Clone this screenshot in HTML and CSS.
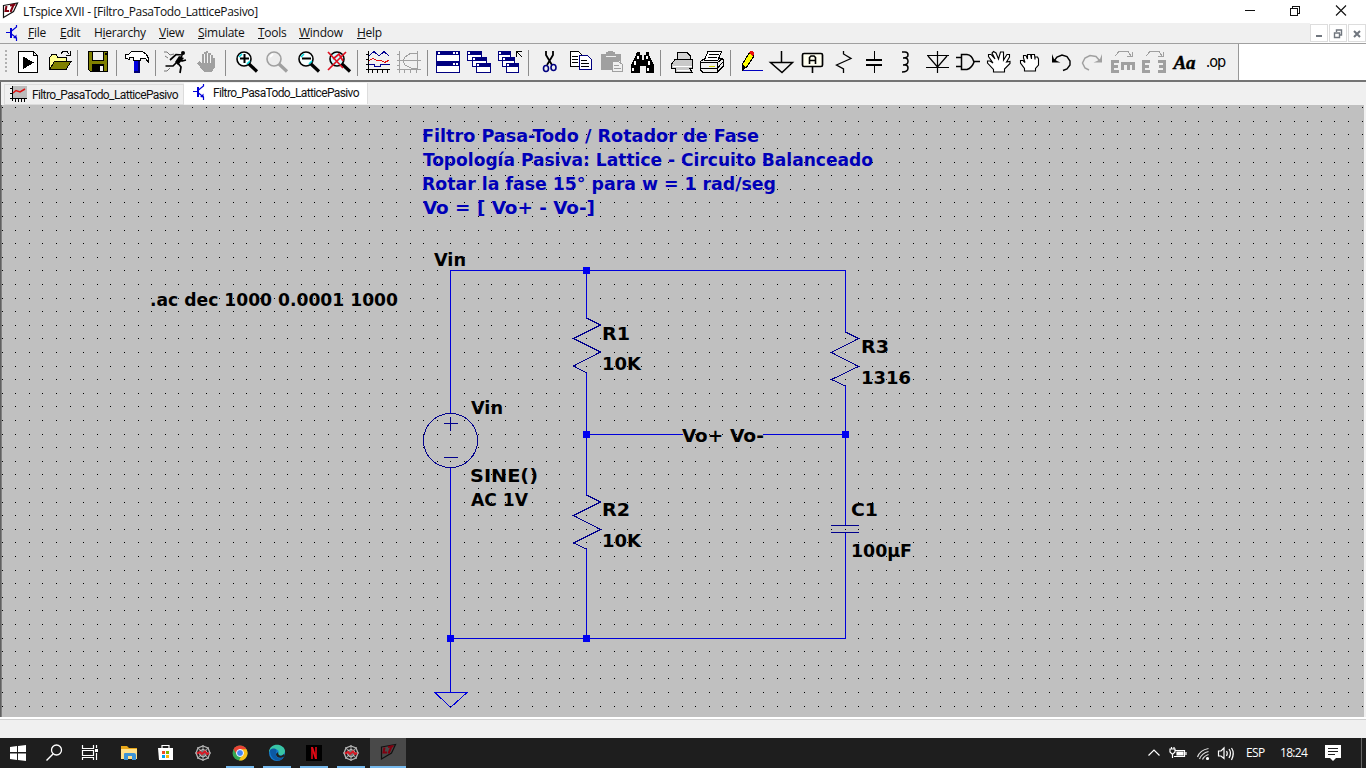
FILE: index.html
```html
<!DOCTYPE html>
<html lang="es">
<head>
<meta charset="utf-8">
<title>LTspice XVII - [Filtro_PasaTodo_LatticePasivo]</title>
<link rel="stylesheet" href="styles.css">
</head>
<body>
<svg class="defs" width="0" height="0" aria-hidden="true">
  <symbol id="lt" viewBox="0 0 17 17">
    <path d="M1.500 3.500L15.500 1L11.500 9.500L1.500 15.500Z" class="lt-face" stroke-width="1.200"/>
    <path d="M4.500 4L3.500 9H7M8 3.500L13.500 2.500M11.500 3L8.500 10" fill="none" stroke="#800010" stroke-width="2"/>
  </symbol>
  <symbol id="bjt" viewBox="0 0 12 16">
    <path d="M0 7.500H5M10.500 0V2L5.500 6M5.500 9L10.500 13V16" fill="none" stroke="#0000d8" stroke-width="1.200"/>
    <path d="M4 3H6V13H4ZM7 13L10.500 9.500V13.500Z" fill="#0000d8"/>
  </symbol>
  <symbol id="spider" viewBox="0 0 18 18">
    <path d="M9 1V17M1 9H17M3.300 3.300L14.700 14.700M14.700 3.300L3.300 14.700" stroke="#999" stroke-width="1.200"/>
    <path d="M9 2L14 4L16 9L14 14L9 16L4 14L2 9L4 4Z" fill="none" stroke="#b5b5b5" stroke-width="1.300"/>
    <path d="M9 5.500L12 6.500L13 9L11.500 12L9 13L6.500 12L5 9L6 6.500Z" fill="#777" stroke="#ddd" stroke-width=".8"/>
    <path d="M3 9.500L6 8L8 10L11 7.500L13 10L15 9" fill="none" stroke="#d81824" stroke-width="2"/>
  </symbol>
  <symbol id="lens" viewBox="0 0 24 24">
    <circle cx="9" cy="9" r="7" stroke-width="1.600"/>
    <path d="M14 14L22 21.500" stroke-width="3.200" fill="none"/>
  </symbol>
</svg>

<header class="titlebar">
  <svg class="app-logo" width="17" height="17"><use href="#lt"/></svg>
  <span class="title">LTspice XVII - [Filtro_PasaTodo_LatticePasivo]</span>
  <svg class="window-buttons" width="138" height="24" viewBox="1228 0 138 24">
    <path d="M1245 10.500H1255M1290.500 8.500H1297.500V15.500H1290.500ZM1292.500 8V6.500H1299.500V13.500H1298" fill="none" stroke="#111" shape-rendering="crispEdges"/>
    <path d="M1336 5.500L1346 15.500M1346 5.500L1336 15.500" stroke="#111" stroke-width="1.100"/>
  </svg>
</header>

<nav class="menubar">
  <svg class="menu-logo" width="12" height="16"><use href="#bjt"/></svg>
  <div class="menus">
    <span><u>F</u>ile</span><span><u>E</u>dit</span><span>H<u>i</u>erarchy</span><span><u>V</u>iew</span><span><u>S</u>imulate</span><span><u>T</u>ools</span><span><u>W</u>indow</span><span><u>H</u>elp</span>
  </div>
  <div class="mdi">
    <span><svg width="16" height="17" viewBox="0 0 16 17"><path d="M5 11H11" stroke="#70767e" stroke-width="2"/></svg></span>
    <span><svg width="16" height="17" viewBox="0 0 16 17"><path d="M4.500 8H9.500V12.500H4.500ZM6.500 7V5H11.500V10H10" fill="none" stroke="#70767e" stroke-width="1.400"/></svg></span>
    <span><svg width="16" height="17" viewBox="0 0 16 17"><path d="M5 6L11 12M11 6L5 12" stroke="#70767e" stroke-width="2"/></svg></span>
  </div>
</nav>

<div class="toolrow">
<div class="toolbar">
  <i class="grip"></i>
  <svg viewBox="12 44 31 36"><path d="M18.500 51.500H33.500L37.500 55.500V72.500H18.500ZM33.500 51.500V55.500H37.500" fill="#fff" stroke="#000"/><path d="M23 56.500L34 62.500L23 69Z"/></svg>
  <svg viewBox="43 44 31 36"><path d="M49.500 69.500V57.500L52 54.500H56L58 57.500H66V61" fill="#ffff90" stroke="#000"/><path d="M49.500 69.500L54.500 61.500H71L66 69.500Z" fill="#808000" stroke="#000"/><path d="M61 53.500L63 51.500H67L69 54M66 55.500H70.500V51" fill="none" stroke="#000"/></svg>
  <i class="sep"></i>
  <svg viewBox="82 44 31 36"><path d="M88.500 51.500H107.500V71.500H90.500L88.500 69.500Z" fill="#808000" stroke="#000"/><path d="M92.500 51.500H103.500V60.500H92.500Z" fill="#f0f0f0" stroke="#000"/><path d="M92 64H104V72H92ZM105 53H107V55H105Z"/><path d="M100 66H103V71H100Z" fill="#f0f0f0"/></svg>
  <i class="sep"></i>
  <svg viewBox="121 44 31 36"><path d="M134 60H140V73H134Z" fill="#0000e0"/><path d="M138 60H140V73H134V71H138Z" fill="#000070"/><path d="M125.500 58.500V54.500H128.500L131.500 51.500H142.500L146.500 54.500L148.500 58.500V62.500L145.500 58.500H140.500V60.500H133.500V57.500H129.500V59.500Z" fill="#fff" stroke="#000"/></svg>
  <i class="sep"></i>
  <svg class="smooth" viewBox="160 44 31 36"><path d="M182 56L177 62L181 67L180 73M177 62L173 66H165.500M183 55L176 54.500L170 60M180 58L182 61L186 60" fill="none" stroke="#000" stroke-width="1.700"/><path d="M179 56L184 58L178 65L175 62Z"/><circle cx="183" cy="53" r="2"/><path d="M164 52L167 52L170 55L174 54M165 56L168 58M170 68L167 71H164" fill="none" stroke="#777"/></svg>
  <svg viewBox="191 44 31 36"><path d="M203 71L197 63L199 61L202 64V54H204V52H206V51H208V53H211V55H213V58H215V67L212 72H204Z" fill="#a0a0a0"/><path d="M204.500 54V63M207.500 53V63M210.500 55V63" stroke="#f4f4f4"/></svg>
  <i class="sep"></i>
  <svg class="smooth" viewBox="230 44 31 36"><g fill="#f8ffff" stroke="#000"><use href="#lens" x="235" y="50" width="24" height="24"/></g><path d="M240 58.500H249M244.500 54V63" stroke="#000" stroke-width="2"/><path d="M239 57L242 54M247 64L250 61" stroke="#00d8e0" stroke-width="1.500"/></svg>
  <svg class="smooth" viewBox="261 44 31 36"><g fill="#ededed" stroke="#a0a0a0"><use href="#lens" x="265" y="50" width="24" height="24"/></g><path d="M270 57L273 54" stroke="#fff" stroke-width="2"/></svg>
  <svg class="smooth" viewBox="292 44 31 36"><g fill="#f8ffff" stroke="#000"><use href="#lens" x="297" y="50" width="24" height="24"/></g><path d="M302 58.500H311" stroke="#000" stroke-width="2"/><path d="M301 57L304 54M309 64L312 61" stroke="#00d8e0" stroke-width="1.500"/></svg>
  <svg class="smooth" viewBox="323 44 31 36"><g fill="#d0faff" stroke="#000"><use href="#lens" x="328" y="50" width="24" height="24"/></g><path d="M328 52L343 68M346 52L328 70M333 59L339 54L343 61" fill="none" stroke="#e01020" stroke-width="1.700"/></svg>
  <i class="sep"></i>
  <svg viewBox="362 44 31 36"><path d="M368.500 51V73M366 69.500H390M366 54.500H369M366 59.500H369M366 64.500H369M372.500 69V73M377.500 69V73M382.500 69V73M387.500 69V73" stroke="#000"/><path d="M369 56L374 51.500L379 56L384 51.500L389 56M369 64.500H374.500V66.500H380.500V64.500H390" fill="none" stroke="#000090"/><path d="M369 60.500L373 58.500L377 60.500H381L385 62.500L389 60" fill="none" stroke="#e01010" stroke-width="1.300"/></svg>
  <svg viewBox="393 44 31 36"><path d="M399.500 51V73M397 69.500H421M397 54.500H400M397 60.500H400M397 65.500H400M404.500 69V73M410.500 69V73M416.500 69V73M417.500 51V69M399 60.500H421M417 53H411L405 57L403 61L405 65L411 68H417" fill="none" stroke="#a0a0a0"/></svg>
  <i class="sep"></i>
  <svg viewBox="432 44 31 36"><path d="M436.500 51.500H459.500V61.500H436.500ZM436.500 62.500H459.500V72.500H436.500Z" fill="#fff" stroke="#000080"/><path d="M437 51H460V55H437ZM437 62H460V66H437Z" fill="#000080"/><path d="M438 53H440M453 53H455M456 53H458M453 64H455M456 64H458" stroke="#fff" stroke-width="2"/></svg>
  <svg viewBox="463 44 31 36"><path d="M467.500 51.500H481.500V60.500H467.500ZM472.500 57.500H486.500V66.500H472.500ZM476.500 63.500H490.500V72.500H476.500Z" fill="#fff" stroke="#000080"/><path d="M467 51H482V55H467ZM472 57H487V61H472ZM476 63H491V67H476Z" fill="#000080"/><path d="M468 53H470M473 59H475M477 65H479" stroke="#fff" stroke-width="2"/></svg>
  <svg viewBox="494 44 31 36"><path d="M498.500 51.500H510.500V60.500H498.500ZM502.500 57.500H514.500V66.500H502.500ZM506.500 63.500H518.500V72.500H506.500Z" fill="#fff" stroke="#000080"/><path d="M498 51H511V55H498ZM502 57H515V61H502ZM506 63H519V67H506Z" fill="#000080"/><path d="M499 53H501M503 59H505M507 65H509" stroke="#fff" stroke-width="2"/><path d="M522 51.500H516.500V57M517 52L522 57" fill="none" stroke="#000" stroke-width="1.300"/></svg>
  <i class="sep"></i>
  <svg class="smooth" viewBox="533 44 31 36"><path d="M546 51V55L552 65M553 51V55L547 65" fill="none" stroke="#000" stroke-width="1.800"/><g fill="none" stroke="#000080" stroke-width="1.600"><ellipse cx="546" cy="68.500" rx="2.500" ry="3"/><ellipse cx="553.500" cy="67.500" rx="2.500" ry="3"/></g></svg>
  <svg viewBox="564 44 31 36"><path d="M570.500 51.500H578.500L582.500 55.500V66.500H570.500Z" fill="#fff" stroke="#000"/><path d="M572 56.500H578M572 59.500H578M572 62.500H578" stroke="#000"/><path d="M579.500 55.500H587.500L591.500 59.500V69.500H579.500Z" fill="#fff" stroke="#000080"/><path d="M581 60.500H587M581 63.500H589M581 66.500H589" stroke="#000"/></svg>
  <svg viewBox="595 44 31 36"><path d="M601 54H606V52H608V51H613V52H615V54H621V70H601Z" fill="#a0a0a0"/><path d="M606 56H616M612 61H619L623 64V71H612Z" fill="#f0f0f0" stroke="#f0f0f0"/><path d="M612.500 61.500H618.500L622.500 64.500V71.500H612.500ZM614 65.500H619M614 68.500H621" fill="none" stroke="#a0a0a0"/></svg>
  <svg viewBox="626 44 31 36"><path d="M637 52H640V55H642V60H644V55H646V52H649V55L654 65V73H646V66H640V73H631V65L636 55Z"/><path d="M635 61V65M649 61V65M638 56V59M647 56V59M633 68V71M648 68V71" stroke="#fff" stroke-width="1.500"/></svg>
  <i class="sep"></i>
  <svg viewBox="665 44 31 36"><path d="M677.500 60V52.500H687L690.500 56V60" fill="#d5d5d5" stroke="#000"/><path d="M671.500 68.500V64L675 59.500H692.500V68.500H690L692 72.500H675V68.500Z" fill="#c9c9c9" stroke="#000"/><path d="M673 66.500H692M677 70.500H690" stroke="#fff"/></svg>
  <svg viewBox="696 44 31 36"><path d="M700.500 61.500L705 58H722L723.500 60V66L717 72.500H703L700.500 70Z" fill="#eee" stroke="#000"/><path d="M704.500 60L708 51.500H721.500L718 60Z" fill="#fff" stroke="#000"/><path d="M709 54.500H719M708 57.500H717M701 62.500H717V72M717 63L723 58M701 68.500H717L723 62" fill="none" stroke="#000"/><path d="M709 66.500H715" stroke="#d5d500"/></svg>
  <i class="sep"></i>
  <svg viewBox="735 44 31 36"><path d="M749 53L754 56L746 68L742 65Z" fill="#ff0" stroke="#000"/><path d="M749 52L751 51L754 52V54L753 56L749 53Z" fill="#e81010"/><path d="M742 65L746 68L742 71Z"/><path d="M743 70.500H763" stroke="#0000c0"/></svg>
  <svg class="smooth" viewBox="766 44 31 36"><path d="M781.500 51V62M770.500 62.500H792.500L782 72.500Z" fill="none" stroke="#000" stroke-width="1.500"/></svg>
  <svg class="smooth" viewBox="797 44 31 36"><rect x="802.500" y="53.500" width="20" height="13" rx="1.500" fill="#fffff0" stroke="#000" stroke-width="1.700"/><path d="M812.500 67V73M809.500 64V57.500L811 56H814L815.500 57.500V64M810 60.500H815" fill="none" stroke="#000" stroke-width="1.600"/></svg>
  <svg class="smooth" viewBox="828 44 31 36"><path d="M843.500 51V54L851 58.500L836.500 65L843.500 69V73" fill="none" stroke="#000" stroke-width="1.300"/></svg>
  <svg viewBox="859 44 31 36"><path d="M866 60H882M866 65H882" stroke="#000" stroke-width="2"/><path d="M874.500 51V60M874.500 66V73" stroke="#000"/></svg>
  <svg class="smooth" viewBox="890 44 31 36"><path d="M902 52H905Q908 52 908 55Q908 58 903 58H905Q908 58 908 61.500Q908 65 903 65H905Q908 65 908 68Q908 72 902 72" fill="none" stroke="#000" stroke-width="1.500"/></svg>
  <svg class="smooth" viewBox="921 44 31 36"><path d="M937.500 51V73M927 55.500H949M928 56L937.500 67L947 56M926 67.500H949" fill="none" stroke="#000" stroke-width="1.200"/></svg>
  <svg class="smooth" viewBox="952 44 31 36"><path d="M956 57.500H962M956 66.500H962M974 61.500H980" stroke="#000" stroke-width="1.300"/><path d="M961.500 54.500H967Q972 55 974 62Q972 68 967 69.500H961.500Z" fill="#eee" stroke="#000" stroke-width="1.500"/></svg>
  <svg class="smooth" viewBox="983 44 31 36"><path d="M993.500 72V69.500L987.500 63V61H990L993 63L988.500 56.500V54.500H991L995 59L992 53L993.500 51.500L996 53L998.500 59L1000.500 52H1003.500V60L1007 54.500H1009.500V57L1006.500 62L1010 61.500V63.500L1004.500 69V72Z" fill="#fff" stroke="#000" stroke-width="1.100"/></svg>
  <svg class="smooth" viewBox="1014 44 31 36"><path d="M1024.500 71V68.500L1020.500 63V60.500H1023L1025 62.500L1023.500 58V55.500H1026L1027.500 59V54.500H1030.500L1031.500 59V54.500H1034.500L1035 59.500V57H1037.500L1038.500 59V65L1035.500 68.500V71Z" fill="#fff" stroke="#000" stroke-width="1.100"/></svg>
  <svg class="smooth" viewBox="1045 44 31 36"><path d="M1054 61L1057 57L1062 55L1067 56.500L1070 61V65L1067 69L1063 70.500" fill="none" stroke="#000" stroke-width="1.400"/><path d="M1052 54V62.500H1060.500L1057 61L1054 59Z"/></svg>
  <svg class="smooth" viewBox="1076 44 31 36"><path d="M1100 61L1096 56.500L1090 55.500L1085 58L1082.500 63L1085 68L1089 70" fill="none" stroke="#a0a0a0" stroke-width="1.500"/><path d="M1102 54V62.500H1093.500L1097 61L1100 59Z" fill="#a0a0a0"/></svg>
  <svg viewBox="1107 44 31 36"><path d="M1115 56L1119 51.500H1128L1131 56M1127 56.500H1132V52" fill="none" stroke="#a0a0a0"/><path d="M1119 61.500H1112.500V71.500H1119M1113 66.500H1118M1121 63.500H1135M1122.500 63V70M1128 65V70M1133.500 63V70" fill="none" stroke="#a0a0a0" stroke-width="3"/></svg>
  <svg viewBox="1138 44 31 36"><path d="M1146 56L1150 51.500H1159L1162 56M1158 56.500H1163V52" fill="none" stroke="#a0a0a0"/><path d="M1150 61.500H1143.500V71.500H1150M1144 66.500H1149M1158 61.500H1164.500V71.500H1158M1159 66.500H1164" fill="none" stroke="#a0a0a0" stroke-width="3"/></svg>
  <span class="tool-text aa">Aa</span>
  <span class="tool-text op">.op</span>
</div>
</div>

<div class="tabs">
  <div class="tab inactive"><svg width="17" height="17" viewBox="0 0 17 17"><path d="M2 0H17V12H2Z" fill="#bcbcbc"/><path d="M2.500 0V15M0 12.500H17M0 2.500H3M0 7.500H3M5.500 12V16M8.500 12V16M11.500 12V16M14.500 12V16" stroke="#000"/><path d="M3 7L6 4.500L10 6L15 3" fill="none" stroke="#e01010" stroke-width="1.500"/></svg><span>Filtro_PasaTodo_LatticePasivo</span></div>
  <div class="tab active"><svg width="12" height="16"><use href="#bjt"/></svg><span>Filtro_PasaTodo_LatticePasivo</span></div>
</div>

<main class="sheet">
  <svg width="1362" height="612" viewBox="2 105 1362 612">
    <defs>
      <pattern id="grid" x="2" y="107" width="68" height="68" patternUnits="userSpaceOnUse">
        <path d="M0 .500h1m12 0h1m13 0h1m12 0h1m13 0h1M0 14.500h1m12 0h1m13 0h1m12 0h1m13 0h1M0 27.500h1m12 0h1m13 0h1m12 0h1m13 0h1M0 41.500h1m12 0h1m13 0h1m12 0h1m13 0h1M0 55.500h1m12 0h1m13 0h1m12 0h1m13 0h1" stroke="#000" shape-rendering="crispEdges"/>
      </pattern>
    </defs>
    <rect x="2" y="105" width="1362" height="612" fill="url(#grid)"/>
    <g class="wire">
      <path d="M450.500 413V270.500H845.500V332M586.500 270V318M586.500 373V495M586.500 549V638M586 434.500H683M763 434.500H845M845.500 386V525M845.500 533V638.500H450M450.500 467V692M435 692.500H467L450.500 707.500Z"/>
    </g>
    <g class="part">
      <path d="M586.500 318L600.500 325L573.500 338.500L600.500 352L573.500 366L586.500 373"/>
      <path d="M586.500 495L600.500 502L573.500 515.500L600.500 529.500L573.500 543L586.500 549"/>
      <path d="M845.500 332L858.500 338.500L831.500 352.500L858.500 366.500L831.500 379.500L845.500 386"/>
      <path d="M831 525.500H859M831 532.500H859"/>
      <circle cx="450.500" cy="440.500" r="27"/>
      <path d="M444 423.500H458M450.500 417V431M444 457.500H458"/>
    </g>
    <path class="node" d="M583 267h7v7h-7zM583 431h7v7h-7zM842 431h7v7h-7zM583 635h7v7h-7zM447 635h7v7h-7z"/>
    <g class="note">
      <text x="422" y="141.500" textLength="337" lengthAdjust="spacingAndGlyphs">Filtro Pasa-Todo / Rotador de Fase</text>
      <text x="423" y="165.500" textLength="450" lengthAdjust="spacingAndGlyphs">Topología Pasiva: Lattice - Circuito Balanceado</text>
      <text x="422" y="189.500" textLength="354" lengthAdjust="spacingAndGlyphs">Rotar la fase 15° para w = 1 rad/seg</text>
      <text x="423" y="213.500" textLength="172" lengthAdjust="spacingAndGlyphs">Vo = [ Vo+ - Vo-]</text>
    </g>
    <g class="label">
      <text x="150" y="305.500" textLength="248" lengthAdjust="spacingAndGlyphs">.ac dec 1000 0.0001 1000</text>
      <text x="434" y="265.500" textLength="32" lengthAdjust="spacingAndGlyphs">Vin</text>
      <text x="471" y="413.500" textLength="32" lengthAdjust="spacingAndGlyphs">Vin</text>
      <text x="470" y="481.500" textLength="68" lengthAdjust="spacingAndGlyphs">SINE()</text>
      <text x="471" y="505.500" textLength="57" lengthAdjust="spacingAndGlyphs">AC 1V</text>
      <text x="602" y="339.500" textLength="28" lengthAdjust="spacingAndGlyphs">R1</text>
      <text x="602" y="369.500" textLength="39" lengthAdjust="spacingAndGlyphs">10K</text>
      <text x="602" y="515.500" textLength="28" lengthAdjust="spacingAndGlyphs">R2</text>
      <text x="602" y="546.500" textLength="39" lengthAdjust="spacingAndGlyphs">10K</text>
      <text x="861" y="352.500" textLength="28" lengthAdjust="spacingAndGlyphs">R3</text>
      <text x="861" y="383.500" textLength="50" lengthAdjust="spacingAndGlyphs">1316</text>
      <text x="682" y="441.500" textLength="41" lengthAdjust="spacingAndGlyphs">Vo+</text>
      <text x="730" y="441.500" textLength="34" lengthAdjust="spacingAndGlyphs">Vo-</text>
      <text x="851" y="515.500" textLength="27" lengthAdjust="spacingAndGlyphs">C1</text>
      <text x="851" y="556.500" textLength="61" lengthAdjust="spacingAndGlyphs">100µF</text>
    </g>
  </svg>
</main>
<div class="statusbar"></div>

<footer class="taskbar">
  <svg viewBox="0 738 36 30" width="36"><path d="M10 747L17 746V752H10ZM18 746L26 745V752H18ZM10 753.500H17V760L10 759ZM18 753.500H26V761L18 760Z" fill="#fff"/></svg>
  <svg viewBox="36 738 36 30" width="36"><circle cx="56.500" cy="750" r="5" fill="none" stroke="#fff" stroke-width="1.300"/><path d="M53 754L46.500 760.500" stroke="#fff" stroke-width="1.500"/></svg>
  <svg viewBox="72 738 36 30" width="36"><path d="M82.500 745V748.500H93.500V745M82.500 760V757.500H93.500V760M82.500 750.500H93.500V755.500H82.500ZM96.500 745V748M96.500 753V760" fill="none" stroke="#fff" stroke-width="1.200"/><path d="M95 749H98V752H95Z" fill="#fff"/></svg>
  <div class="apps">
    <svg viewBox="111 738 36 30"><path d="M121 746H127L129 748H137V759H121Z" fill="#e8a719"/><path d="M121 749H137V759H121Z" fill="#ffe08a"/><path d="M124 760V754Q124 753 125 753H134Q136 753 136 755V760H132V756H128V760Z" fill="#3b93d6"/></svg>
    <svg viewBox="148 738 36 30"><path d="M158 748H173V760H159Z" fill="#fff"/><path d="M162 748V745.500H169V748" fill="none" stroke="#fff" stroke-width="1.200"/><path d="M162 751H165V754H162Z" fill="#f25022"/><path d="M166 751H169V754H166Z" fill="#7fba00"/><path d="M162 755H165V758H162Z" fill="#00a4ef"/><path d="M166 755H169V758H166Z" fill="#ffb900"/></svg>
    <svg viewBox="185 738 36 30"><use href="#spider" x="194" y="744" width="18" height="18"/></svg>
    <svg class="open" viewBox="222 738 36 30"><circle cx="240" cy="753" r="7.500" fill="#34a853"/><path d="M233.500 749.300A7.500 7.500 0 0 1 246.500 749.300L240 753Z" fill="#ea4335"/><path d="M246.500 749.300A7.500 7.500 0 0 1 239 760.500L243 753L240 749.300Z" fill="#fbc116"/><path d="M233.500 749.300L237 755L240 750Z" fill="#ea4335"/><circle cx="240" cy="753" r="3.500" fill="#4285f4" stroke="#fff"/></svg>
    <svg class="open" viewBox="259 738 36 30"><circle cx="277" cy="753" r="8" fill="#137bd0"/><path d="M269 752C270 742 284 743 285 751C285 755 280 757 278 754C281 750 274 746 269 752Z" fill="#39c5a5"/><path d="M270 750C274 747 278 749 276 753C275 759 281 759 284 757C279 764 270 760 270 750Z" fill="#0c59a4"/><path d="M276 754C276 758 281 759 285 756L284 754C281 757 278 756 278 752Z" fill="#202020"/></svg>
    <svg class="open" viewBox="296 738 36 30"><path d="M306 745H322V761H306Z" fill="#000"/><path d="M312 747V759M316 747V759" stroke="#b20710" stroke-width="2"/><path d="M311 747H313L317 759H315Z" fill="#e50914"/></svg>
    <svg class="open" viewBox="333 738 36 30"><use href="#spider" x="342" y="744" width="18" height="18"/></svg>
    <svg class="open current" viewBox="370 738 36 30"><use href="#lt" x="380" y="743" width="17" height="18"/></svg>
  </div>
  <div class="tray">
    <svg width="99" height="30" viewBox="1141 738 99 30" fill="none" stroke="#fff" stroke-width="1.200"><path d="M1148.500 755.500L1154 750L1159.500 755.500"/><path d="M1175 750.500H1184.500V756.500H1174M1186 752V755M1170 749H1175V752L1172.500 754.500L1170 752ZM1171.500 747V749M1174 747V749M1172.500 754V758"/><path d="M1177 752H1183V755H1177Z" fill="#fff"/><path d="M1197.500 757Q1200 750 1208.500 748.500M1199.500 759Q1202 753 1208.500 751.500M1202.500 759.500Q1204 756 1208.500 754.500" stroke="#ddd"/><circle cx="1207.500" cy="758.500" r="1" fill="#fff"/><path d="M1218.500 751H1221L1224 748V758.500L1221 756H1218.500ZM1226.500 751Q1228 753 1226.500 756M1229 749Q1232 753 1229 758M1231.500 748Q1235 753 1231.500 760"/></svg>
    <span class="lang">ESP</span><span class="clock">18:24</span>
    <svg width="48" height="30" viewBox="1318 738 48 30"><path d="M1325 745H1341V758H1336L1333 761L1330 758H1325Z" fill="#fff"/><path d="M1328 748.500H1338M1328 751.500H1338M1328 754.500H1335" stroke="#202020"/><path d="M1361.500 738V768" stroke="#666"/></svg>
  </div>
</footer>
</body>
</html>
```
FILE: styles.css
```css
* { box-sizing: border-box; }
body {
  margin: 0;
  width: 1366px;
  height: 768px;
  overflow: hidden;
  display: flex;
  flex-direction: column;
  background: #f0f0f0;
  color: #111;
  font: 12px/1 "Open Sans", "Noto Sans", sans-serif;
}
svg { display: block; flex: none; }
.defs { display: none; }
.lt-face { fill: var(--face, #fff); stroke: #111; }

.titlebar { flex: none; height: 23px; display: flex; align-items: center; background: #fff; }
.app-logo { margin: 0 4px 2px 2px; }
.title { font-size: 12px; letter-spacing: -0.33px; }
.window-buttons { margin-left: auto; }

.menubar { flex: none; height: 21px; display: flex; border-bottom: 1px solid #a0a0a0; }
.menu-logo { margin: 2px 10px 0 6px; }
.menus { display: grid; grid-template-columns: 32px 34px 65px 39px 60px 41px 58px 40px; align-items: center; font-size: 12px; letter-spacing: -0.28px; }
.menus u { text-underline-offset: 1px; }
.mdi { margin-left: auto; padding-top: 1px; display: flex; gap: 1px; background: #fff; }
.mdi span { width: 18px; height: 18px; border: 1px solid #ddd; background: #fff; }

.toolrow { flex: none; height: 38px; background: #fff; border-bottom: 2px solid #747474; }
.toolbar { width: 1239px; height: 36px; display: flex; background: #f0f0f0; border-right: 1px solid #989898; }
.toolbar svg { width: 31px; height: 36px; shape-rendering: crispEdges; }
.toolbar .smooth { shape-rendering: auto; }
.grip { width: 12px; height: 24px; margin-top: 6px; background: repeating-linear-gradient(#b0b0b0 0 2px, transparent 2px 4px) 5px 0 / 2px 24px no-repeat; }
.sep { width: 8px; height: 26px; margin-top: 6px; background: linear-gradient(#8c8c8c, #8c8c8c) 3px 0 / 1px 26px no-repeat; }
.tool-text { width: 31px; text-align: center; color: #000; }
.aa { font: italic bold 19px/37px "Liberation Serif", serif; -webkit-text-stroke: 0.4px #000; }
.op { font: 16px/35px "DejaVu Sans Condensed", "DejaVu Sans", sans-serif; font-stretch: condensed; letter-spacing: -1px; }

.tabs { flex: none; height: 23px; padding: 1px 0 0 3px; display: flex; border-left: 1px solid #606060; font: 12px/1 Roboto, sans-serif; letter-spacing: -0.62px; white-space: nowrap; }
.tab { display: flex; }
.inactive { width: 180px; height: 21px; margin-top: 1px; padding: 1px 0 0 5px; border: 1px solid #dcdcdc; gap: 5px; }
.inactive span { padding-top: 3px; }
.active { width: 184px; height: 21px; background: #fff; padding: 1px 0 0 9px; gap: 8px; border-right: 1px solid #ddd; }
.active span { padding-top: 3px; }

.sheet { flex: none; height: 612px; width: 1364px; border-left: 1px solid #606060; padding-left: 1px; background: #c0c0c0; box-shadow: inset 1px 0 #808080; }
.wire { fill: none; stroke: #0000da; shape-rendering: crispEdges; }
.part { fill: none; stroke: #00008c; shape-rendering: crispEdges; }
.node { fill: #0000f0; }
.note, .label { font: bold 18px "DejaVu Sans Condensed", "DejaVu Sans", sans-serif; font-stretch: condensed; }
.note { fill: #0000b8; }
.label { fill: #000; }

.statusbar { flex: none; height: 21px; border-top: 2px solid #fff; box-shadow: inset 0 1px #d0d0d0; }

.taskbar { flex: none; height: 30px; display: flex; background: #1e1e1e; color: #fff; }
.taskbar svg { height: 30px; }
.apps { display: flex; gap: 1px; margin-left: 3px; }
.apps svg { width: 36px; }
.open { background: linear-gradient(#76b9ed, #76b9ed) 4px 28px / 28px 2px no-repeat; }
.current { background: linear-gradient(#76b9ed, #76b9ed) 0 28px / 36px 2px no-repeat #494949; --face: #494949; }
.tray { margin-left: auto; display: flex; font: 12px/30px "Open Sans", sans-serif; }
.lang { width: 34px; padding-left: 6px; letter-spacing: -0.6px; }
.clock { width: 44px; padding-left: 6px; letter-spacing: -0.7px; }
```
